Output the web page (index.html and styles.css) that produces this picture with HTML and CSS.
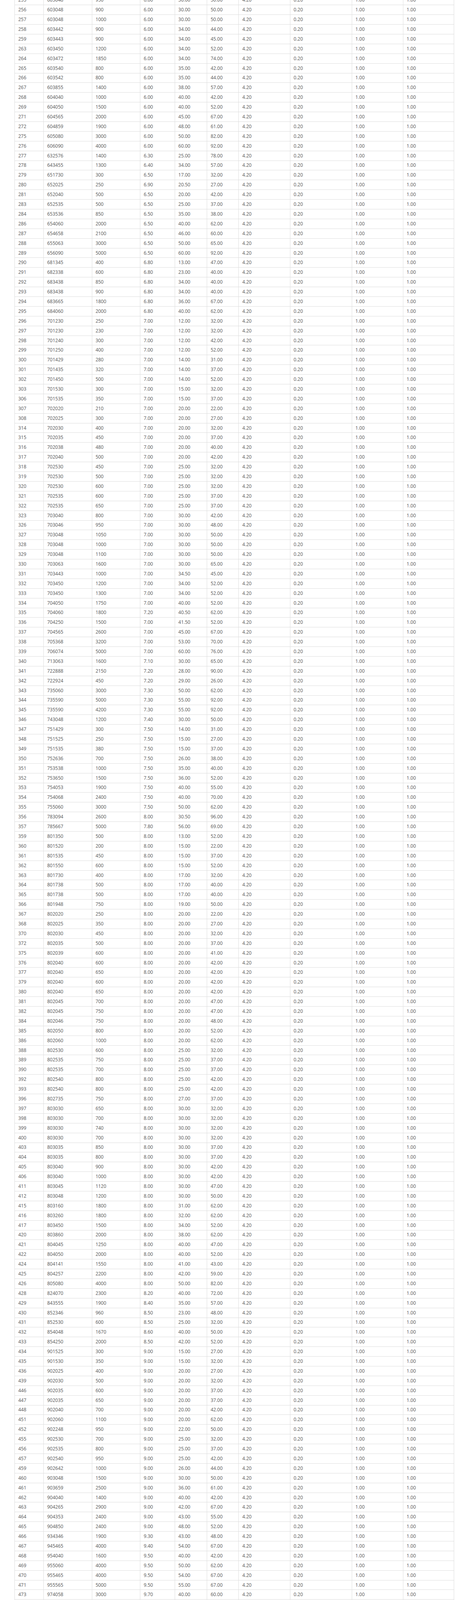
FILE: index.html
```html
<!DOCTYPE html>
<html lang="en">
<head>
<meta charset="utf-8">
<title>Table</title>
<link rel="stylesheet" href="styles.css">
</head>
<body>
<div class="wrap">
<table class="grid">
<colgroup>
<col class="c1"><col class="c2"><col class="c3"><col class="c4"><col class="c5"><col class="c6"><col class="c7"><col class="c8"><col class="c9"><col class="c10">
</colgroup>
<tbody>
<tr><td>255</td><td>603048</td><td>950</td><td>6.00</td><td>30.00</td><td>50.00</td><td>4.20</td><td>0.20</td><td>1.00</td><td>1.00</td></tr>
<tr><td>256</td><td>603048</td><td>900</td><td>6.00</td><td>30.00</td><td>50.00</td><td>4.20</td><td>0.20</td><td>1.00</td><td>1.00</td></tr>
<tr><td>257</td><td>603048</td><td>1000</td><td>6.00</td><td>30.00</td><td>50.00</td><td>4.20</td><td>0.20</td><td>1.00</td><td>1.00</td></tr>
<tr><td>258</td><td>603442</td><td>900</td><td>6.00</td><td>34.00</td><td>44.00</td><td>4.20</td><td>0.20</td><td>1.00</td><td>1.00</td></tr>
<tr><td>259</td><td>603443</td><td>900</td><td>6.00</td><td>34.00</td><td>45.00</td><td>4.20</td><td>0.20</td><td>1.00</td><td>1.00</td></tr>
<tr><td>263</td><td>603450</td><td>1200</td><td>6.00</td><td>34.00</td><td>52.00</td><td>4.20</td><td>0.20</td><td>1.00</td><td>1.00</td></tr>
<tr><td>264</td><td>603472</td><td>1850</td><td>6.00</td><td>34.00</td><td>74.00</td><td>4.20</td><td>0.20</td><td>1.00</td><td>1.00</td></tr>
<tr><td>265</td><td>603540</td><td>800</td><td>6.00</td><td>35.00</td><td>42.00</td><td>4.20</td><td>0.20</td><td>1.00</td><td>1.00</td></tr>
<tr><td>266</td><td>603542</td><td>800</td><td>6.00</td><td>35.00</td><td>44.00</td><td>4.20</td><td>0.20</td><td>1.00</td><td>1.00</td></tr>
<tr><td>267</td><td>603855</td><td>1400</td><td>6.00</td><td>38.00</td><td>57.00</td><td>4.20</td><td>0.20</td><td>1.00</td><td>1.00</td></tr>
<tr><td>268</td><td>604040</td><td>1000</td><td>6.00</td><td>40.00</td><td>42.00</td><td>4.20</td><td>0.20</td><td>1.00</td><td>1.00</td></tr>
<tr><td>269</td><td>604050</td><td>1500</td><td>6.00</td><td>40.00</td><td>52.00</td><td>4.20</td><td>0.20</td><td>1.00</td><td>1.00</td></tr>
<tr><td>271</td><td>604565</td><td>2000</td><td>6.00</td><td>45.00</td><td>67.00</td><td>4.20</td><td>0.20</td><td>1.00</td><td>1.00</td></tr>
<tr><td>272</td><td>604859</td><td>1900</td><td>6.00</td><td>48.00</td><td>61.00</td><td>4.20</td><td>0.20</td><td>1.00</td><td>1.00</td></tr>
<tr><td>275</td><td>605080</td><td>3000</td><td>6.00</td><td>50.00</td><td>82.00</td><td>4.20</td><td>0.20</td><td>1.00</td><td>1.00</td></tr>
<tr><td>276</td><td>606090</td><td>4000</td><td>6.00</td><td>60.00</td><td>92.00</td><td>4.20</td><td>0.20</td><td>1.00</td><td>1.00</td></tr>
<tr><td>277</td><td>632576</td><td>1400</td><td>6.30</td><td>25.00</td><td>78.00</td><td>4.20</td><td>0.20</td><td>1.00</td><td>1.00</td></tr>
<tr><td>278</td><td>643455</td><td>1300</td><td>6.40</td><td>34.00</td><td>57.00</td><td>4.20</td><td>0.20</td><td>1.00</td><td>1.00</td></tr>
<tr><td>279</td><td>651730</td><td>300</td><td>6.50</td><td>17.00</td><td>32.00</td><td>4.20</td><td>0.20</td><td>1.00</td><td>1.00</td></tr>
<tr><td>280</td><td>652025</td><td>250</td><td>6.90</td><td>20.50</td><td>27.00</td><td>4.20</td><td>0.20</td><td>1.00</td><td>1.00</td></tr>
<tr><td>281</td><td>652040</td><td>500</td><td>6.50</td><td>20.00</td><td>42.00</td><td>4.20</td><td>0.20</td><td>1.00</td><td>1.00</td></tr>
<tr><td>283</td><td>652535</td><td>500</td><td>6.50</td><td>25.00</td><td>37.00</td><td>4.20</td><td>0.20</td><td>1.00</td><td>1.00</td></tr>
<tr><td>284</td><td>653536</td><td>850</td><td>6.50</td><td>35.00</td><td>38.00</td><td>4.20</td><td>0.20</td><td>1.00</td><td>1.00</td></tr>
<tr><td>286</td><td>654060</td><td>2000</td><td>6.50</td><td>40.00</td><td>62.00</td><td>4.20</td><td>0.20</td><td>1.00</td><td>1.00</td></tr>
<tr><td>287</td><td>654658</td><td>2100</td><td>6.50</td><td>46.00</td><td>60.00</td><td>4.20</td><td>0.20</td><td>1.00</td><td>1.00</td></tr>
<tr><td>288</td><td>655063</td><td>3000</td><td>6.50</td><td>50.00</td><td>65.00</td><td>4.20</td><td>0.20</td><td>1.00</td><td>1.00</td></tr>
<tr><td>289</td><td>656090</td><td>5000</td><td>6.50</td><td>60.00</td><td>92.00</td><td>4.20</td><td>0.20</td><td>1.00</td><td>1.00</td></tr>
<tr><td>290</td><td>681345</td><td>400</td><td>6.80</td><td>13.00</td><td>47.00</td><td>4.20</td><td>0.20</td><td>1.00</td><td>1.00</td></tr>
<tr><td>291</td><td>682338</td><td>600</td><td>6.80</td><td>23.00</td><td>40.00</td><td>4.20</td><td>0.20</td><td>1.00</td><td>1.00</td></tr>
<tr><td>292</td><td>683438</td><td>850</td><td>6.80</td><td>34.00</td><td>40.00</td><td>4.20</td><td>0.20</td><td>1.00</td><td>1.00</td></tr>
<tr><td>293</td><td>683438</td><td>900</td><td>6.80</td><td>34.00</td><td>40.00</td><td>4.20</td><td>0.20</td><td>1.00</td><td>1.00</td></tr>
<tr><td>294</td><td>683665</td><td>1800</td><td>6.80</td><td>36.00</td><td>67.00</td><td>4.20</td><td>0.20</td><td>1.00</td><td>1.00</td></tr>
<tr><td>295</td><td>684060</td><td>2000</td><td>6.80</td><td>40.00</td><td>62.00</td><td>4.20</td><td>0.20</td><td>1.00</td><td>1.00</td></tr>
<tr><td>296</td><td>701230</td><td>250</td><td>7.00</td><td>12.00</td><td>32.00</td><td>4.20</td><td>0.20</td><td>1.00</td><td>1.00</td></tr>
<tr><td>297</td><td>701230</td><td>230</td><td>7.00</td><td>12.00</td><td>32.00</td><td>4.20</td><td>0.20</td><td>1.00</td><td>1.00</td></tr>
<tr><td>298</td><td>701240</td><td>300</td><td>7.00</td><td>12.00</td><td>42.00</td><td>4.20</td><td>0.20</td><td>1.00</td><td>1.00</td></tr>
<tr><td>299</td><td>701250</td><td>400</td><td>7.00</td><td>12.00</td><td>52.00</td><td>4.20</td><td>0.20</td><td>1.00</td><td>1.00</td></tr>
<tr><td>300</td><td>701429</td><td>280</td><td>7.00</td><td>14.00</td><td>31.00</td><td>4.20</td><td>0.20</td><td>1.00</td><td>1.00</td></tr>
<tr><td>301</td><td>701435</td><td>320</td><td>7.00</td><td>14.00</td><td>37.00</td><td>4.20</td><td>0.20</td><td>1.00</td><td>1.00</td></tr>
<tr><td>302</td><td>701450</td><td>500</td><td>7.00</td><td>14.00</td><td>52.00</td><td>4.20</td><td>0.20</td><td>1.00</td><td>1.00</td></tr>
<tr><td>303</td><td>701530</td><td>300</td><td>7.00</td><td>15.00</td><td>32.00</td><td>4.20</td><td>0.20</td><td>1.00</td><td>1.00</td></tr>
<tr><td>306</td><td>701535</td><td>350</td><td>7.00</td><td>15.00</td><td>37.00</td><td>4.20</td><td>0.20</td><td>1.00</td><td>1.00</td></tr>
<tr><td>307</td><td>702020</td><td>210</td><td>7.00</td><td>20.00</td><td>22.00</td><td>4.20</td><td>0.20</td><td>1.00</td><td>1.00</td></tr>
<tr><td>308</td><td>702025</td><td>300</td><td>7.00</td><td>20.00</td><td>27.00</td><td>4.20</td><td>0.20</td><td>1.00</td><td>1.00</td></tr>
<tr><td>314</td><td>702030</td><td>400</td><td>7.00</td><td>20.00</td><td>32.00</td><td>4.20</td><td>0.20</td><td>1.00</td><td>1.00</td></tr>
<tr><td>315</td><td>702035</td><td>450</td><td>7.00</td><td>20.00</td><td>37.00</td><td>4.20</td><td>0.20</td><td>1.00</td><td>1.00</td></tr>
<tr><td>316</td><td>702038</td><td>480</td><td>7.00</td><td>20.00</td><td>40.00</td><td>4.20</td><td>0.20</td><td>1.00</td><td>1.00</td></tr>
<tr><td>317</td><td>702040</td><td>500</td><td>7.00</td><td>20.00</td><td>42.00</td><td>4.20</td><td>0.20</td><td>1.00</td><td>1.00</td></tr>
<tr><td>318</td><td>702530</td><td>450</td><td>7.00</td><td>25.00</td><td>32.00</td><td>4.20</td><td>0.20</td><td>1.00</td><td>1.00</td></tr>
<tr><td>319</td><td>702530</td><td>500</td><td>7.00</td><td>25.00</td><td>32.00</td><td>4.20</td><td>0.20</td><td>1.00</td><td>1.00</td></tr>
<tr><td>320</td><td>702530</td><td>600</td><td>7.00</td><td>25.00</td><td>32.00</td><td>4.20</td><td>0.20</td><td>1.00</td><td>1.00</td></tr>
<tr><td>321</td><td>702535</td><td>600</td><td>7.00</td><td>25.00</td><td>37.00</td><td>4.20</td><td>0.20</td><td>1.00</td><td>1.00</td></tr>
<tr><td>322</td><td>702535</td><td>650</td><td>7.00</td><td>25.00</td><td>37.00</td><td>4.20</td><td>0.20</td><td>1.00</td><td>1.00</td></tr>
<tr><td>323</td><td>703040</td><td>800</td><td>7.00</td><td>30.00</td><td>42.00</td><td>4.20</td><td>0.20</td><td>1.00</td><td>1.00</td></tr>
<tr><td>326</td><td>703046</td><td>950</td><td>7.00</td><td>30.00</td><td>48.00</td><td>4.20</td><td>0.20</td><td>1.00</td><td>1.00</td></tr>
<tr><td>327</td><td>703048</td><td>1050</td><td>7.00</td><td>30.00</td><td>50.00</td><td>4.20</td><td>0.20</td><td>1.00</td><td>1.00</td></tr>
<tr><td>328</td><td>703048</td><td>1000</td><td>7.00</td><td>30.00</td><td>50.00</td><td>4.20</td><td>0.20</td><td>1.00</td><td>1.00</td></tr>
<tr><td>329</td><td>703048</td><td>1100</td><td>7.00</td><td>30.00</td><td>50.00</td><td>4.20</td><td>0.20</td><td>1.00</td><td>1.00</td></tr>
<tr><td>330</td><td>703063</td><td>1600</td><td>7.00</td><td>30.00</td><td>65.00</td><td>4.20</td><td>0.20</td><td>1.00</td><td>1.00</td></tr>
<tr><td>331</td><td>703443</td><td>1000</td><td>7.00</td><td>34.50</td><td>45.00</td><td>4.20</td><td>0.20</td><td>1.00</td><td>1.00</td></tr>
<tr><td>332</td><td>703450</td><td>1200</td><td>7.00</td><td>34.00</td><td>52.00</td><td>4.20</td><td>0.20</td><td>1.00</td><td>1.00</td></tr>
<tr><td>333</td><td>703450</td><td>1300</td><td>7.00</td><td>34.00</td><td>52.00</td><td>4.20</td><td>0.20</td><td>1.00</td><td>1.00</td></tr>
<tr><td>334</td><td>704050</td><td>1750</td><td>7.00</td><td>40.00</td><td>52.00</td><td>4.20</td><td>0.20</td><td>1.00</td><td>1.00</td></tr>
<tr><td>335</td><td>704060</td><td>1800</td><td>7.20</td><td>40.50</td><td>62.00</td><td>4.20</td><td>0.20</td><td>1.00</td><td>1.00</td></tr>
<tr><td>336</td><td>704250</td><td>1500</td><td>7.00</td><td>41.50</td><td>52.00</td><td>4.20</td><td>0.20</td><td>1.00</td><td>1.00</td></tr>
<tr><td>337</td><td>704565</td><td>2600</td><td>7.00</td><td>45.00</td><td>67.00</td><td>4.20</td><td>0.20</td><td>1.00</td><td>1.00</td></tr>
<tr><td>338</td><td>705368</td><td>3200</td><td>7.00</td><td>53.00</td><td>70.00</td><td>4.20</td><td>0.20</td><td>1.00</td><td>1.00</td></tr>
<tr><td>339</td><td>706074</td><td>5000</td><td>7.00</td><td>60.00</td><td>76.00</td><td>4.20</td><td>0.20</td><td>1.00</td><td>1.00</td></tr>
<tr><td>340</td><td>713063</td><td>1600</td><td>7.10</td><td>30.00</td><td>65.00</td><td>4.20</td><td>0.20</td><td>1.00</td><td>1.00</td></tr>
<tr><td>341</td><td>722888</td><td>2150</td><td>7.20</td><td>28.00</td><td>90.00</td><td>4.20</td><td>0.20</td><td>1.00</td><td>1.00</td></tr>
<tr><td>342</td><td>722924</td><td>450</td><td>7.20</td><td>29.00</td><td>26.00</td><td>4.20</td><td>0.20</td><td>1.00</td><td>1.00</td></tr>
<tr><td>343</td><td>735060</td><td>3000</td><td>7.30</td><td>50.00</td><td>62.00</td><td>4.20</td><td>0.20</td><td>1.00</td><td>1.00</td></tr>
<tr><td>344</td><td>735590</td><td>5000</td><td>7.30</td><td>55.00</td><td>92.00</td><td>4.20</td><td>0.20</td><td>1.00</td><td>1.00</td></tr>
<tr><td>345</td><td>735590</td><td>4200</td><td>7.30</td><td>55.00</td><td>92.00</td><td>4.20</td><td>0.20</td><td>1.00</td><td>1.00</td></tr>
<tr><td>346</td><td>743048</td><td>1200</td><td>7.40</td><td>30.00</td><td>50.00</td><td>4.20</td><td>0.20</td><td>1.00</td><td>1.00</td></tr>
<tr><td>347</td><td>751429</td><td>300</td><td>7.50</td><td>14.00</td><td>31.00</td><td>4.20</td><td>0.20</td><td>1.00</td><td>1.00</td></tr>
<tr><td>348</td><td>751525</td><td>250</td><td>7.50</td><td>15.00</td><td>27.00</td><td>4.20</td><td>0.20</td><td>1.00</td><td>1.00</td></tr>
<tr><td>349</td><td>751535</td><td>380</td><td>7.50</td><td>15.00</td><td>37.00</td><td>4.20</td><td>0.20</td><td>1.00</td><td>1.00</td></tr>
<tr><td>350</td><td>752636</td><td>700</td><td>7.50</td><td>26.00</td><td>38.00</td><td>4.20</td><td>0.20</td><td>1.00</td><td>1.00</td></tr>
<tr><td>351</td><td>753538</td><td>1000</td><td>7.50</td><td>35.00</td><td>40.00</td><td>4.20</td><td>0.20</td><td>1.00</td><td>1.00</td></tr>
<tr><td>352</td><td>753650</td><td>1500</td><td>7.50</td><td>36.00</td><td>52.00</td><td>4.20</td><td>0.20</td><td>1.00</td><td>1.00</td></tr>
<tr><td>353</td><td>754053</td><td>1900</td><td>7.50</td><td>40.00</td><td>55.00</td><td>4.20</td><td>0.20</td><td>1.00</td><td>1.00</td></tr>
<tr><td>354</td><td>754068</td><td>2400</td><td>7.50</td><td>40.00</td><td>70.00</td><td>4.20</td><td>0.20</td><td>1.00</td><td>1.00</td></tr>
<tr><td>355</td><td>755060</td><td>3000</td><td>7.50</td><td>50.00</td><td>62.00</td><td>4.20</td><td>0.20</td><td>1.00</td><td>1.00</td></tr>
<tr><td>356</td><td>783094</td><td>2600</td><td>8.00</td><td>30.50</td><td>96.00</td><td>4.20</td><td>0.20</td><td>1.00</td><td>1.00</td></tr>
<tr><td>357</td><td>785667</td><td>5000</td><td>7.80</td><td>56.00</td><td>69.00</td><td>4.20</td><td>0.20</td><td>1.00</td><td>1.00</td></tr>
<tr><td>359</td><td>801350</td><td>500</td><td>8.00</td><td>13.00</td><td>52.00</td><td>4.20</td><td>0.20</td><td>1.00</td><td>1.00</td></tr>
<tr><td>360</td><td>801520</td><td>200</td><td>8.00</td><td>15.00</td><td>22.00</td><td>4.20</td><td>0.20</td><td>1.00</td><td>1.00</td></tr>
<tr><td>361</td><td>801535</td><td>450</td><td>8.00</td><td>15.00</td><td>37.00</td><td>4.20</td><td>0.20</td><td>1.00</td><td>1.00</td></tr>
<tr><td>362</td><td>801550</td><td>600</td><td>8.00</td><td>15.00</td><td>52.00</td><td>4.20</td><td>0.20</td><td>1.00</td><td>1.00</td></tr>
<tr><td>363</td><td>801730</td><td>400</td><td>8.00</td><td>17.00</td><td>32.00</td><td>4.20</td><td>0.20</td><td>1.00</td><td>1.00</td></tr>
<tr><td>364</td><td>801738</td><td>500</td><td>8.00</td><td>17.00</td><td>40.00</td><td>4.20</td><td>0.20</td><td>1.00</td><td>1.00</td></tr>
<tr><td>365</td><td>801738</td><td>500</td><td>8.00</td><td>17.00</td><td>40.00</td><td>4.20</td><td>0.20</td><td>1.00</td><td>1.00</td></tr>
<tr><td>366</td><td>801948</td><td>750</td><td>8.00</td><td>19.00</td><td>50.00</td><td>4.20</td><td>0.20</td><td>1.00</td><td>1.00</td></tr>
<tr><td>367</td><td>802020</td><td>250</td><td>8.00</td><td>20.00</td><td>22.00</td><td>4.20</td><td>0.20</td><td>1.00</td><td>1.00</td></tr>
<tr><td>368</td><td>802025</td><td>350</td><td>8.00</td><td>20.00</td><td>27.00</td><td>4.20</td><td>0.20</td><td>1.00</td><td>1.00</td></tr>
<tr><td>370</td><td>802030</td><td>450</td><td>8.00</td><td>20.00</td><td>32.00</td><td>4.20</td><td>0.20</td><td>1.00</td><td>1.00</td></tr>
<tr><td>372</td><td>802035</td><td>500</td><td>8.00</td><td>20.00</td><td>37.00</td><td>4.20</td><td>0.20</td><td>1.00</td><td>1.00</td></tr>
<tr><td>375</td><td>802039</td><td>600</td><td>8.00</td><td>20.00</td><td>41.00</td><td>4.20</td><td>0.20</td><td>1.00</td><td>1.00</td></tr>
<tr><td>376</td><td>802040</td><td>600</td><td>8.00</td><td>20.00</td><td>42.00</td><td>4.20</td><td>0.20</td><td>1.00</td><td>1.00</td></tr>
<tr><td>377</td><td>802040</td><td>650</td><td>8.00</td><td>20.00</td><td>42.00</td><td>4.20</td><td>0.20</td><td>1.00</td><td>1.00</td></tr>
<tr><td>379</td><td>802040</td><td>600</td><td>8.00</td><td>20.00</td><td>42.00</td><td>4.20</td><td>0.20</td><td>1.00</td><td>1.00</td></tr>
<tr><td>380</td><td>802040</td><td>650</td><td>8.00</td><td>20.00</td><td>42.00</td><td>4.20</td><td>0.20</td><td>1.00</td><td>1.00</td></tr>
<tr><td>381</td><td>802045</td><td>700</td><td>8.00</td><td>20.00</td><td>47.00</td><td>4.20</td><td>0.20</td><td>1.00</td><td>1.00</td></tr>
<tr><td>382</td><td>802045</td><td>750</td><td>8.00</td><td>20.00</td><td>47.00</td><td>4.20</td><td>0.20</td><td>1.00</td><td>1.00</td></tr>
<tr><td>384</td><td>802046</td><td>750</td><td>8.00</td><td>20.00</td><td>48.00</td><td>4.20</td><td>0.20</td><td>1.00</td><td>1.00</td></tr>
<tr><td>385</td><td>802050</td><td>800</td><td>8.00</td><td>20.00</td><td>52.00</td><td>4.20</td><td>0.20</td><td>1.00</td><td>1.00</td></tr>
<tr><td>386</td><td>802060</td><td>1000</td><td>8.00</td><td>20.00</td><td>62.00</td><td>4.20</td><td>0.20</td><td>1.00</td><td>1.00</td></tr>
<tr><td>388</td><td>802530</td><td>600</td><td>8.00</td><td>25.00</td><td>32.00</td><td>4.20</td><td>0.20</td><td>1.00</td><td>1.00</td></tr>
<tr><td>389</td><td>802535</td><td>750</td><td>8.00</td><td>25.00</td><td>37.00</td><td>4.20</td><td>0.20</td><td>1.00</td><td>1.00</td></tr>
<tr><td>390</td><td>802535</td><td>700</td><td>8.00</td><td>25.00</td><td>37.00</td><td>4.20</td><td>0.20</td><td>1.00</td><td>1.00</td></tr>
<tr><td>392</td><td>802540</td><td>800</td><td>8.00</td><td>25.00</td><td>42.00</td><td>4.20</td><td>0.20</td><td>1.00</td><td>1.00</td></tr>
<tr><td>393</td><td>802540</td><td>800</td><td>8.00</td><td>25.00</td><td>42.00</td><td>4.20</td><td>0.20</td><td>1.00</td><td>1.00</td></tr>
<tr><td>396</td><td>802735</td><td>750</td><td>8.00</td><td>27.00</td><td>37.00</td><td>4.20</td><td>0.20</td><td>1.00</td><td>1.00</td></tr>
<tr><td>397</td><td>803030</td><td>650</td><td>8.00</td><td>30.00</td><td>32.00</td><td>4.20</td><td>0.20</td><td>1.00</td><td>1.00</td></tr>
<tr><td>398</td><td>803030</td><td>700</td><td>8.00</td><td>30.00</td><td>32.00</td><td>4.20</td><td>0.20</td><td>1.00</td><td>1.00</td></tr>
<tr><td>399</td><td>803030</td><td>740</td><td>8.00</td><td>30.00</td><td>32.00</td><td>4.20</td><td>0.20</td><td>1.00</td><td>1.00</td></tr>
<tr><td>400</td><td>803030</td><td>700</td><td>8.00</td><td>30.00</td><td>32.00</td><td>4.20</td><td>0.20</td><td>1.00</td><td>1.00</td></tr>
<tr><td>403</td><td>803035</td><td>850</td><td>8.00</td><td>30.00</td><td>37.00</td><td>4.20</td><td>0.20</td><td>1.00</td><td>1.00</td></tr>
<tr><td>404</td><td>803035</td><td>800</td><td>8.00</td><td>30.00</td><td>37.00</td><td>4.20</td><td>0.20</td><td>1.00</td><td>1.00</td></tr>
<tr><td>405</td><td>803040</td><td>900</td><td>8.00</td><td>30.00</td><td>42.00</td><td>4.20</td><td>0.20</td><td>1.00</td><td>1.00</td></tr>
<tr><td>406</td><td>803040</td><td>1000</td><td>8.00</td><td>30.00</td><td>42.00</td><td>4.20</td><td>0.20</td><td>1.00</td><td>1.00</td></tr>
<tr><td>411</td><td>803045</td><td>1120</td><td>8.00</td><td>30.00</td><td>47.00</td><td>4.20</td><td>0.20</td><td>1.00</td><td>1.00</td></tr>
<tr><td>412</td><td>803048</td><td>1200</td><td>8.00</td><td>30.00</td><td>50.00</td><td>4.20</td><td>0.20</td><td>1.00</td><td>1.00</td></tr>
<tr><td>415</td><td>803160</td><td>1800</td><td>8.00</td><td>31.00</td><td>62.00</td><td>4.20</td><td>0.20</td><td>1.00</td><td>1.00</td></tr>
<tr><td>416</td><td>803260</td><td>1800</td><td>8.00</td><td>32.00</td><td>62.00</td><td>4.20</td><td>0.20</td><td>1.00</td><td>1.00</td></tr>
<tr><td>417</td><td>803450</td><td>1500</td><td>8.00</td><td>34.00</td><td>52.00</td><td>4.20</td><td>0.20</td><td>1.00</td><td>1.00</td></tr>
<tr><td>420</td><td>803860</td><td>2000</td><td>8.00</td><td>38.00</td><td>62.00</td><td>4.20</td><td>0.20</td><td>1.00</td><td>1.00</td></tr>
<tr><td>421</td><td>804045</td><td>1250</td><td>8.00</td><td>40.00</td><td>47.00</td><td>4.20</td><td>0.20</td><td>1.00</td><td>1.00</td></tr>
<tr><td>422</td><td>804050</td><td>2000</td><td>8.00</td><td>40.00</td><td>52.00</td><td>4.20</td><td>0.20</td><td>1.00</td><td>1.00</td></tr>
<tr><td>424</td><td>804141</td><td>1550</td><td>8.00</td><td>41.00</td><td>43.00</td><td>4.20</td><td>0.20</td><td>1.00</td><td>1.00</td></tr>
<tr><td>425</td><td>804257</td><td>2200</td><td>8.00</td><td>42.00</td><td>59.00</td><td>4.20</td><td>0.20</td><td>1.00</td><td>1.00</td></tr>
<tr><td>426</td><td>805080</td><td>4000</td><td>8.00</td><td>50.00</td><td>82.00</td><td>4.20</td><td>0.20</td><td>1.00</td><td>1.00</td></tr>
<tr><td>428</td><td>824070</td><td>2300</td><td>8.20</td><td>40.00</td><td>72.00</td><td>4.20</td><td>0.20</td><td>1.00</td><td>1.00</td></tr>
<tr><td>429</td><td>843555</td><td>1900</td><td>8.40</td><td>35.00</td><td>57.00</td><td>4.20</td><td>0.20</td><td>1.00</td><td>1.00</td></tr>
<tr><td>430</td><td>852346</td><td>960</td><td>8.50</td><td>23.00</td><td>48.00</td><td>4.20</td><td>0.20</td><td>1.00</td><td>1.00</td></tr>
<tr><td>431</td><td>852530</td><td>600</td><td>8.50</td><td>25.00</td><td>32.00</td><td>4.20</td><td>0.20</td><td>1.00</td><td>1.00</td></tr>
<tr><td>432</td><td>854048</td><td>1670</td><td>8.60</td><td>40.00</td><td>50.00</td><td>4.20</td><td>0.20</td><td>1.00</td><td>1.00</td></tr>
<tr><td>433</td><td>854250</td><td>2000</td><td>8.50</td><td>42.00</td><td>52.00</td><td>4.20</td><td>0.20</td><td>1.00</td><td>1.00</td></tr>
<tr><td>434</td><td>901525</td><td>300</td><td>9.00</td><td>15.00</td><td>27.00</td><td>4.20</td><td>0.20</td><td>1.00</td><td>1.00</td></tr>
<tr><td>435</td><td>901530</td><td>350</td><td>9.00</td><td>15.00</td><td>32.00</td><td>4.20</td><td>0.20</td><td>1.00</td><td>1.00</td></tr>
<tr><td>436</td><td>902025</td><td>400</td><td>9.00</td><td>20.00</td><td>27.00</td><td>4.20</td><td>0.20</td><td>1.00</td><td>1.00</td></tr>
<tr><td>439</td><td>902030</td><td>500</td><td>9.00</td><td>20.00</td><td>32.00</td><td>4.20</td><td>0.20</td><td>1.00</td><td>1.00</td></tr>
<tr><td>446</td><td>902035</td><td>600</td><td>9.00</td><td>20.00</td><td>37.00</td><td>4.20</td><td>0.20</td><td>1.00</td><td>1.00</td></tr>
<tr><td>447</td><td>902035</td><td>650</td><td>9.00</td><td>20.00</td><td>37.00</td><td>4.20</td><td>0.20</td><td>1.00</td><td>1.00</td></tr>
<tr><td>448</td><td>902040</td><td>700</td><td>9.00</td><td>20.00</td><td>42.00</td><td>4.20</td><td>0.20</td><td>1.00</td><td>1.00</td></tr>
<tr><td>451</td><td>902060</td><td>1100</td><td>9.00</td><td>20.00</td><td>62.00</td><td>4.20</td><td>0.20</td><td>1.00</td><td>1.00</td></tr>
<tr><td>452</td><td>902248</td><td>950</td><td>9.00</td><td>22.00</td><td>50.00</td><td>4.20</td><td>0.20</td><td>1.00</td><td>1.00</td></tr>
<tr><td>455</td><td>902530</td><td>700</td><td>9.00</td><td>25.00</td><td>32.00</td><td>4.20</td><td>0.20</td><td>1.00</td><td>1.00</td></tr>
<tr><td>456</td><td>902535</td><td>800</td><td>9.00</td><td>25.00</td><td>37.00</td><td>4.20</td><td>0.20</td><td>1.00</td><td>1.00</td></tr>
<tr><td>457</td><td>902540</td><td>950</td><td>9.00</td><td>25.00</td><td>42.00</td><td>4.20</td><td>0.20</td><td>1.00</td><td>1.00</td></tr>
<tr><td>459</td><td>902642</td><td>1000</td><td>9.00</td><td>26.00</td><td>44.00</td><td>4.20</td><td>0.20</td><td>1.00</td><td>1.00</td></tr>
<tr><td>460</td><td>903048</td><td>1500</td><td>9.00</td><td>30.00</td><td>50.00</td><td>4.20</td><td>0.20</td><td>1.00</td><td>1.00</td></tr>
<tr><td>461</td><td>903659</td><td>2500</td><td>9.00</td><td>36.00</td><td>61.00</td><td>4.20</td><td>0.20</td><td>1.00</td><td>1.00</td></tr>
<tr><td>462</td><td>904040</td><td>1400</td><td>9.00</td><td>40.00</td><td>42.00</td><td>4.20</td><td>0.20</td><td>1.00</td><td>1.00</td></tr>
<tr><td>463</td><td>904265</td><td>2900</td><td>9.00</td><td>42.00</td><td>67.00</td><td>4.20</td><td>0.20</td><td>1.00</td><td>1.00</td></tr>
<tr><td>464</td><td>904353</td><td>2400</td><td>9.00</td><td>43.00</td><td>55.00</td><td>4.20</td><td>0.20</td><td>1.00</td><td>1.00</td></tr>
<tr><td>465</td><td>904850</td><td>2400</td><td>9.00</td><td>48.00</td><td>52.00</td><td>4.20</td><td>0.20</td><td>1.00</td><td>1.00</td></tr>
<tr><td>466</td><td>934346</td><td>1900</td><td>9.30</td><td>43.00</td><td>48.00</td><td>4.20</td><td>0.20</td><td>1.00</td><td>1.00</td></tr>
<tr><td>467</td><td>945465</td><td>4000</td><td>9.40</td><td>54.00</td><td>67.00</td><td>4.20</td><td>0.20</td><td>1.00</td><td>1.00</td></tr>
<tr><td>468</td><td>954040</td><td>1600</td><td>9.50</td><td>40.00</td><td>42.00</td><td>4.20</td><td>0.20</td><td>1.00</td><td>1.00</td></tr>
<tr><td>469</td><td>955060</td><td>4000</td><td>9.50</td><td>50.00</td><td>62.00</td><td>4.20</td><td>0.20</td><td>1.00</td><td>1.00</td></tr>
<tr><td>470</td><td>955465</td><td>4000</td><td>9.50</td><td>54.00</td><td>67.00</td><td>4.20</td><td>0.20</td><td>1.00</td><td>1.00</td></tr>
<tr><td>471</td><td>955565</td><td>5000</td><td>9.50</td><td>55.00</td><td>67.00</td><td>4.20</td><td>0.20</td><td>1.00</td><td>1.00</td></tr>
<tr><td>473</td><td>974058</td><td>3000</td><td>9.70</td><td>40.00</td><td>60.00</td><td>4.20</td><td>0.20</td><td>1.00</td><td>1.00</td></tr>
<tr><td>474</td><td>982465</td><td>1750</td><td>9.80</td><td>24.00</td><td>67.00</td><td>4.20</td><td>0.20</td><td>1.00</td><td>1.00</td></tr>
<tr><td>475</td><td>1160100</td><td>10000</td><td>11.00</td><td>60.00</td><td>102.00</td><td>4.20</td><td>0.20</td><td>1.00</td><td>1.00</td></tr>
<tr><td>476</td><td>1260100</td><td>10000</td><td>12.00</td><td>60.00</td><td>102.00</td><td>4.20</td><td>0.20</td><td>1.00</td><td>1.00</td></tr>
<tr><td>477</td><td>1260110</td><td>9000</td><td>12.00</td><td>60.00</td><td>112.00</td><td>4.20</td><td>0.20</td><td>1.00</td><td>1.00</td></tr>
<tr><td>478</td><td>1260110</td><td>9500</td><td>12.00</td><td>60.00</td><td>112.00</td><td>4.20</td><td>0.20</td><td>1.00</td><td>1.00</td></tr>
<tr><td>479</td><td>1260110</td><td>10000</td><td>12.00</td><td>60.00</td><td>112.00</td><td>4.20</td><td>0.20</td><td>1.00</td><td>1.00</td></tr>
<tr><td>480</td><td>1260110</td><td>10000</td><td>12.00</td><td>60.00</td><td>112.00</td><td>4.20</td><td>0.20</td><td>1.00</td><td>1.00</td></tr>
<tr><td>481</td><td>1376074</td><td>10000</td><td>14.00</td><td>60.00</td><td>76.00</td><td>4.20</td><td>0.20</td><td>1.00</td><td>1.00</td></tr>
<tr><td>482</td><td>6060100</td><td>5000</td><td>6.00</td><td>60.00</td><td>102.00</td><td>4.20</td><td>0.20</td><td>1.00</td><td>1.00</td></tr>
<tr><td>483</td><td>6065113</td><td>6000</td><td>6.00</td><td>65.00</td><td>115.00</td><td>4.20</td><td>0.20</td><td>1.00</td><td>1.00</td></tr>
<tr><td>484</td><td>7565121</td><td>7000</td><td>7.50</td><td>65.00</td><td>123.00</td><td>4.20</td><td>0.20</td><td>1.00</td><td>1.00</td></tr>
<tr><td>485</td><td>7565121</td><td>8000</td><td>7.50</td><td>65.00</td><td>123.00</td><td>4.20</td><td>0.20</td><td>1.00</td><td>1.00</td></tr>
<tr><td>486</td><td>8870129</td><td>10000</td><td>8.80</td><td>70.00</td><td>131.00</td><td>4.20</td><td>0.20</td><td>1.00</td><td>1.00</td></tr>
<tr><td>487</td><td>9060100</td><td>8000</td><td>9.00</td><td>60.00</td><td>102.00</td><td>4.20</td><td>0.20</td><td>1.00</td><td>1.00</td></tr>
<tr><td>488</td><td>9065113</td><td>10000</td><td>9.00</td><td>65.00</td><td>115.00</td><td>4.20</td><td>0.20</td><td>1.00</td><td>1.00</td></tr>
<tr><td>489</td><td>9858102</td><td>10000</td><td>9.80</td><td>58.00</td><td>104.00</td><td>4.20</td><td>0.20</td><td>1.00</td><td>1.00</td></tr>
<tr><td>490</td><td>9960115</td><td>10000</td><td>10.00</td><td>60.00</td><td>117.00</td><td>4.20</td><td>0.20</td><td>1.00</td><td>1.00</td></tr>
<tr><td>491</td><td>101550</td><td>800</td><td>10.00</td><td>15.00</td><td>52.00</td><td>4.20</td><td>0.20</td><td>1.00</td><td>1.00</td></tr>
<tr><td>492</td><td>102025</td><td>500</td><td>10.00</td><td>20.00</td><td>27.00</td><td>4.20</td><td>0.20</td><td>1.00</td><td>1.00</td></tr>
<tr><td>493</td><td>102030</td><td>600</td><td>10.00</td><td>20.00</td><td>32.00</td><td>4.20</td><td>0.20</td><td>1.00</td><td>1.00</td></tr>
<tr><td>494</td><td>102035</td><td>700</td><td>10.00</td><td>20.00</td><td>37.00</td><td>4.20</td><td>0.20</td><td>1.00</td><td>1.00</td></tr>
<tr><td>495</td><td>102040</td><td>800</td><td>10.00</td><td>20.00</td><td>42.00</td><td>4.20</td><td>0.20</td><td>1.00</td><td>1.00</td></tr>
<tr><td>496</td><td>102045</td><td>900</td><td>10.00</td><td>20.00</td><td>47.00</td><td>4.20</td><td>0.20</td><td>1.00</td><td>1.00</td></tr>
<tr><td>497</td><td>102050</td><td>1000</td><td>10.00</td><td>20.00</td><td>52.00</td><td>4.20</td><td>0.20</td><td>1.00</td><td>1.00</td></tr>
<tr><td>498</td><td>102050</td><td>1000</td><td>10.00</td><td>20.00</td><td>52.00</td><td>4.20</td><td>0.20</td><td>1.00</td><td>1.00</td></tr>
<tr><td>499</td><td>102060</td><td>1200</td><td>10.00</td><td>20.00</td><td>62.00</td><td>4.20</td><td>0.20</td><td>1.00</td><td>1.00</td></tr>
<tr><td>500</td><td>102530</td><td>800</td><td>10.00</td><td>25.00</td><td>32.00</td><td>4.20</td><td>0.20</td><td>1.00</td><td>1.00</td></tr>
<tr><td>501</td><td>102535</td><td>800</td><td>10.00</td><td>25.00</td><td>37.00</td><td>4.20</td><td>0.20</td><td>1.00</td><td>1.00</td></tr>
<tr><td>502</td><td>102535</td><td>900</td><td>10.00</td><td>25.00</td><td>37.00</td><td>4.20</td><td>0.20</td><td>1.00</td><td>1.00</td></tr>
<tr><td>503</td><td>102540</td><td>1100</td><td>10.00</td><td>25.00</td><td>42.00</td><td>4.20</td><td>0.20</td><td>1.00</td><td>1.00</td></tr>
<tr><td>504</td><td>102550</td><td>1500</td><td>10.00</td><td>25.00</td><td>52.00</td><td>4.20</td><td>0.20</td><td>1.00</td><td>1.00</td></tr>
<tr><td>505</td><td>103030</td><td>900</td><td>10.00</td><td>30.00</td><td>32.00</td><td>4.20</td><td>0.20</td><td>1.00</td><td>1.00</td></tr>
<tr><td>506</td><td>103033</td><td>900</td><td>10.00</td><td>30.00</td><td>35.00</td><td>4.20</td><td>0.20</td><td>1.00</td><td>1.00</td></tr>
<tr><td>507</td><td>103035</td><td>1000</td><td>10.00</td><td>30.00</td><td>37.00</td><td>4.20</td><td>0.20</td><td>1.00</td><td>1.00</td></tr>
<tr><td>508</td><td>103035</td><td>950</td><td>10.00</td><td>30.00</td><td>37.00</td><td>4.20</td><td>0.20</td><td>1.00</td><td>1.00</td></tr>
<tr><td>509</td><td>103035</td><td>1050</td><td>10.00</td><td>30.00</td><td>37.00</td><td>4.20</td><td>0.20</td><td>1.00</td><td>1.00</td></tr>
<tr><td>510</td><td>103035</td><td>1100</td><td>10.00</td><td>30.00</td><td>37.00</td><td>4.20</td><td>0.20</td><td>1.00</td><td>1.00</td></tr>
<tr><td>511</td><td>103040</td><td>1200</td><td>10.00</td><td>30.00</td><td>42.00</td><td>4.20</td><td>0.20</td><td>1.00</td><td>1.00</td></tr>
<tr><td>512</td><td>103040</td><td>1200</td><td>10.00</td><td>30.00</td><td>42.00</td><td>4.20</td><td>0.20</td><td>1.00</td><td>1.00</td></tr>
<tr><td>513</td><td>103048</td><td>1500</td><td>10.00</td><td>30.00</td><td>50.00</td><td>4.20</td><td>0.20</td><td>1.00</td><td>1.00</td></tr>
<tr><td>514</td><td>103443</td><td>1600</td><td>10.00</td><td>34.00</td><td>45.00</td><td>4.20</td><td>0.20</td><td>1.00</td><td>1.00</td></tr>
<tr><td>515</td><td>103443</td><td>1500</td><td>10.00</td><td>34.00</td><td>45.00</td><td>4.20</td><td>0.20</td><td>1.00</td><td>1.00</td></tr>
<tr><td>516</td><td>103450</td><td>1800</td><td>10.00</td><td>34.50</td><td>52.00</td><td>4.20</td><td>0.20</td><td>1.00</td><td>1.00</td></tr>
<tr><td>517</td><td>103450</td><td>2000</td><td>10.00</td><td>34.50</td><td>52.00</td><td>4.20</td><td>0.20</td><td>1.00</td><td>1.00</td></tr>
<tr><td>518</td><td>103665</td><td>3000</td><td>10.00</td><td>36.00</td><td>67.00</td><td>4.20</td><td>0.20</td><td>1.00</td><td>1.00</td></tr>
<tr><td>519</td><td>103740</td><td>1600</td><td>10.00</td><td>37.00</td><td>42.00</td><td>4.20</td><td>0.20</td><td>1.00</td><td>1.00</td></tr>
<tr><td>520</td><td>103763</td><td>2800</td><td>10.00</td><td>37.00</td><td>65.00</td><td>4.20</td><td>0.20</td><td>1.00</td><td>1.00</td></tr>
<tr><td>522</td><td>104050</td><td>2500</td><td>10.00</td><td>40.00</td><td>52.00</td><td>4.20</td><td>0.20</td><td>1.00</td><td>1.00</td></tr>
<tr><td>523</td><td>105050</td><td>3000</td><td>10.00</td><td>50.00</td><td>52.00</td><td>4.20</td><td>0.20</td><td>1.00</td><td>1.00</td></tr>
<tr><td>524</td><td>105063</td><td>4000</td><td>10.00</td><td>50.00</td><td>65.00</td><td>4.20</td><td>0.20</td><td>1.00</td><td>1.00</td></tr>
<tr><td>525</td><td>105080</td><td>5000</td><td>10.00</td><td>50.00</td><td>82.00</td><td>4.20</td><td>0.20</td><td>1.00</td><td>1.00</td></tr>
<tr><td>526</td><td>105568</td><td>5000</td><td>10.00</td><td>55.00</td><td>70.00</td><td>4.20</td><td>0.20</td><td>1.00</td><td>1.00</td></tr>
<tr><td>527</td><td>112740</td><td>1150</td><td>11.00</td><td>27.00</td><td>42.00</td><td>4.20</td><td>0.20</td><td>1.00</td><td>1.00</td></tr>
<tr><td>528</td><td>114065</td><td>4000</td><td>11.00</td><td>40.00</td><td>67.00</td><td>4.20</td><td>0.20</td><td>1.00</td><td>1.00</td></tr>
<tr><td>529</td><td>114250</td><td>2500</td><td>11.00</td><td>42.00</td><td>52.00</td><td>4.20</td><td>0.20</td><td>1.00</td><td>1.00</td></tr>
<tr><td>530</td><td>114861</td><td>4500</td><td>11.00</td><td>48.00</td><td>63.00</td><td>4.20</td><td>0.20</td><td>1.00</td><td>1.00</td></tr>
<tr><td>531</td><td>115570</td><td>4500</td><td>11.00</td><td>55.00</td><td>72.00</td><td>4.20</td><td>0.20</td><td>1.00</td><td>1.00</td></tr>
<tr><td>532</td><td>115570</td><td>4800</td><td>11.00</td><td>55.00</td><td>72.00</td><td>4.20</td><td>0.20</td><td>1.00</td><td>1.00</td></tr>
<tr><td>533</td><td>115570</td><td>5000</td><td>11.00</td><td>55.00</td><td>72.00</td><td>4.20</td><td>0.20</td><td>1.00</td><td>1.00</td></tr>
<tr><td>534</td><td>124050</td><td>3000</td><td>12.00</td><td>40.00</td><td>52.00</td><td>4.20</td><td>0.20</td><td>1.00</td><td>1.00</td></tr>
<tr><td>535</td><td>124065</td><td>4000</td><td>12.00</td><td>40.00</td><td>67.00</td><td>4.20</td><td>0.20</td><td>1.00</td><td>1.00</td></tr>
<tr><td>536</td><td>126090</td><td>8000</td><td>12.00</td><td>60.00</td><td>92.00</td><td>4.20</td><td>0.20</td><td>1.00</td><td>1.00</td></tr>
<tr><td>537</td><td>126280</td><td>10000</td><td>12.00</td><td>62.00</td><td>82.00</td><td>4.20</td><td>0.20</td><td>1.00</td><td>1.00</td></tr>
</tbody>
</table>
</div>
</body>
</html>
```
FILE: styles.css
```css
html, body {
  margin: 0;
  padding: 0;
  background: #ffffff;
}

body {
  font-family: "Open Sans", "Noto Sans", "Liberation Sans", sans-serif;
  font-size: 12px;
  color: #555555;
}

.wrap {
  margin: -12.6px 0 0 37px;
  width: 1124px;
}

.grid {
  width: 1124px;
  border-collapse: collapse;
  table-layout: fixed;
}

.grid td {
  height: 24.9px;
  padding: 0 8px 0 8.7px;
  border: 1px solid #dddddd;
  line-height: 16px;
  vertical-align: middle;
  white-space: nowrap;
  box-sizing: border-box;
}

.c1 { width: 74px; }
.c2 { width: 123.7px; }
.c3 { width: 123.3px; }
.c4 { width: 88.7px; }
.c5 { width: 82.6px; }
.c6 { width: 81px; }
.c7 { width: 131.4px; }
.c8 { width: 158px; }
.c9 { width: 131px; }
.c10 { width: 130.3px; }
```
